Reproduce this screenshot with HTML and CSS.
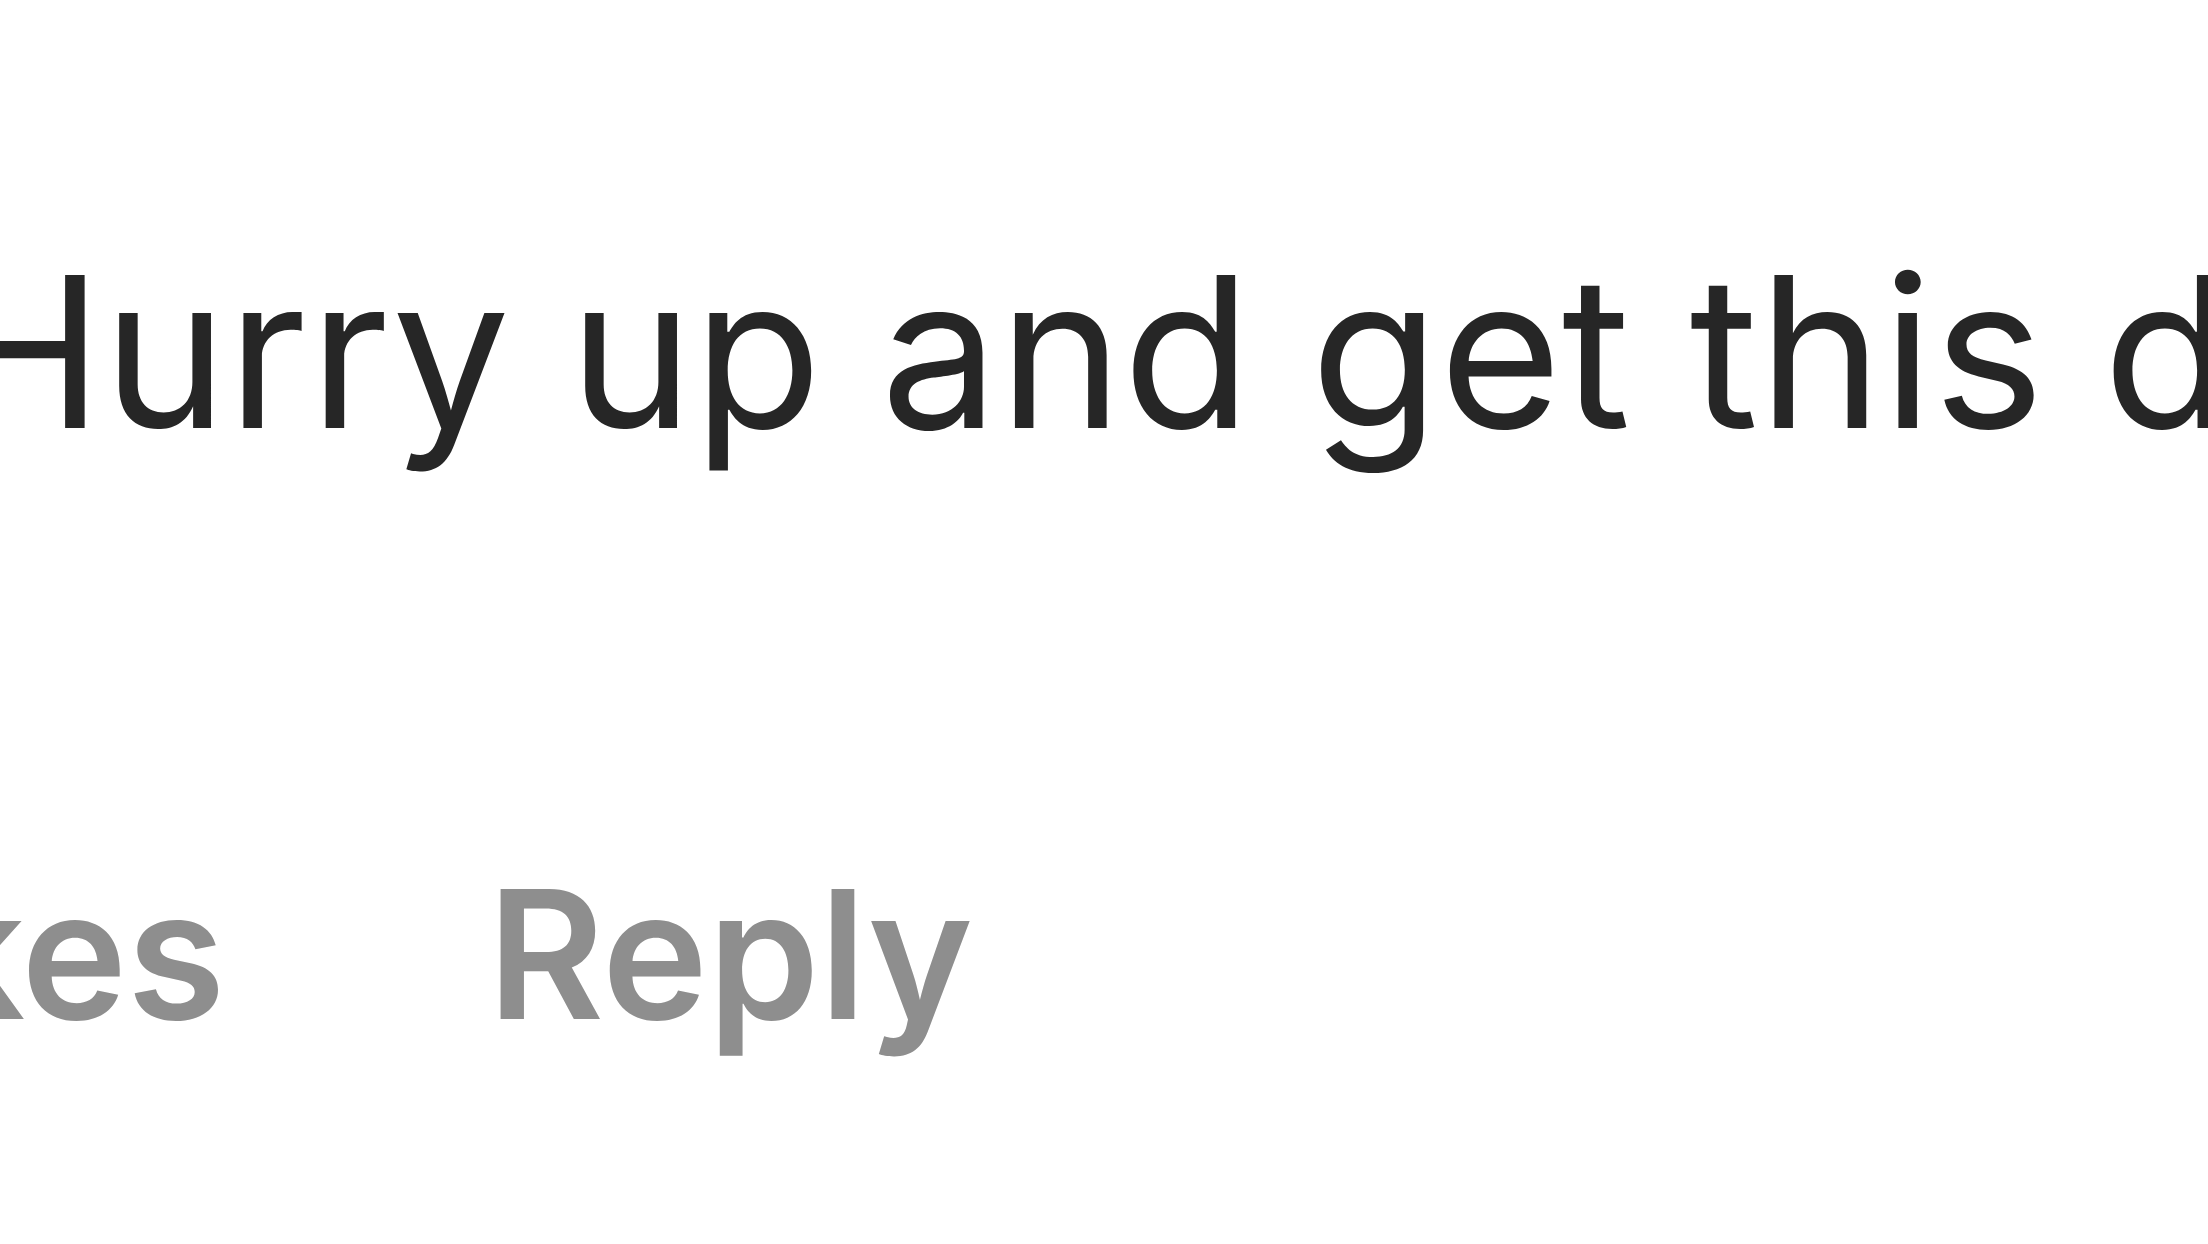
FILE: index.html
```html
<!DOCTYPE html>
<html lang="en">
<head>
    <meta charset="UTF-8">
    <meta name="viewport" content="width=device-width, initial-scale=1.0">
    <title>Comment</title>
    <link rel="stylesheet" href="styles.css">
</head>
<body>
    <div class="comment">
        <!-- comment body -->
        <div class="comment-text">Hurry up and get this done already</div>

        <!-- likes and reply -->
        <div class="comment-meta">
            <span class="likes">2 likes</span>
            <button class="reply">Reply</button>
        </div>
    </div>
</body>
</html>
```

FILE: styles.css
```css
html, body {
    margin: 0;
    padding: 0;
    width: 100%;
    height: 100%;
    overflow: hidden;
    background: #fff;
}

body {
    font-family: Inter, "Noto Sans", Arial, sans-serif;
    color: #262626;
}

.comment {
    padding-top: 202px;
    white-space: nowrap;
}

.comment-text {
    font-size: 210px;
    line-height: 300px;
    font-weight: 400;
    margin-left: -53px;
}

.comment-meta {
    display: flex;
    align-items: baseline;
    margin-top: 327px;
    margin-left: -327px;
    font-size: 179px;
    line-height: 250px;
    font-weight: 600;
    color: #8e8e8e;
}

.reply {
    font: inherit;
    color: inherit;
    background: none;
    border: none;
    padding: 0;
    margin-left: 262px;
    cursor: pointer;
}
```
